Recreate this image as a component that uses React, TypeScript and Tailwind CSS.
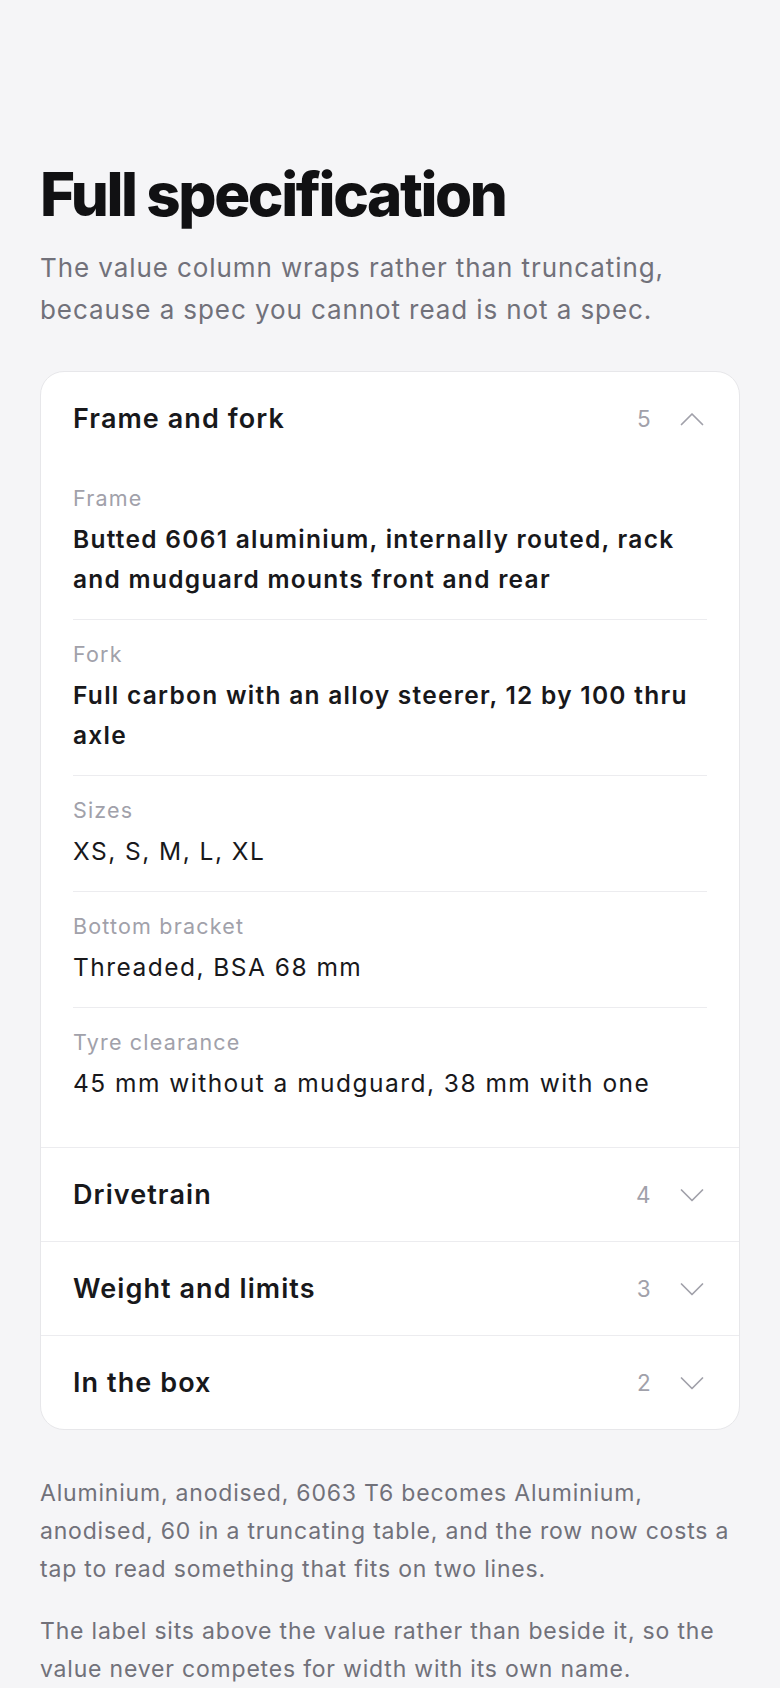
import { useState } from 'react';

type Spec = { label: string; value: string; strong?: boolean };

type Section = { title: string; items: Spec[] };

const sections: Section[] = [
  {
    title: 'Frame and fork',
    items: [
      { label: 'Frame', value: 'Butted 6061 aluminium, internally routed, rack and mudguard mounts front and rear', strong: true },
      { label: 'Fork', value: 'Full carbon with an alloy steerer, 12 by 100 thru axle', strong: true },
      { label: 'Sizes', value: 'XS, S, M, L, XL' },
      { label: 'Bottom bracket', value: 'Threaded, BSA 68 mm' },
      { label: 'Tyre clearance', value: '45 mm without a mudguard, 38 mm with one' },
    ],
  },
  {
    title: 'Drivetrain',
    items: [
      { label: 'Groupset', value: 'Shimano GRX 1x11' },
      { label: 'Chainring', value: '40T' },
      { label: 'Cassette', value: '11-42T' },
      { label: 'Brakes', value: 'Hydraulic disc, 160 mm rotors' },
    ],
  },
  {
    title: 'Weight and limits',
    items: [
      { label: 'Weight', value: '10.2 kg, size M' },
      { label: 'Rider limit', value: '120 kg' },
      { label: 'Rack limit', value: '25 kg' },
    ],
  },
  {
    title: 'In the box',
    items: [
      { label: 'Tools', value: 'Multi-tool and torque key' },
      { label: 'Pedals', value: 'Not included' },
    ],
  },
];

function Chevron({ up }: { up: boolean }) {
  return (
    <svg width="24" height="24" viewBox="0 0 24 24" fill="none" className="shrink-0 text-[#a1a1aa]">
      <path
        d={up ? 'M1.5 17.5L12 7L22.5 17.5' : 'M1.5 7L12 17.5L22.5 7'}
        stroke="currentColor"
        strokeWidth="1.75"
        strokeLinecap="round"
        strokeLinejoin="round"
      />
    </svg>
  );
}

export default function App() {
  const [open, setOpen] = useState<number | null>(0);

  return (
    <div className="min-h-screen bg-[#f5f5f7] px-10 pt-[164px] pb-10 font-['Inter',sans-serif]">
      <h1 className="text-[60px] leading-none font-extrabold tracking-[-0.04em] text-[#111113]">
        Full specification
      </h1>
      <p className="mt-[23px] text-[26px] leading-[42px] tracking-[0.035em] text-[#71717a]">
        The value column wraps rather than truncating, because a spec you cannot read is not a spec.
      </p>

      <div className="mt-10 overflow-hidden rounded-3xl border border-[#e7e7ea] bg-white">
        {sections.map((section, i) => {
          const isOpen = open === i;
          return (
            <div key={section.title} className={i > 0 ? 'border-t border-[#ececef]' : ''}>
              <button
                type="button"
                onClick={() => setOpen(isOpen ? null : i)}
                className="flex w-full items-center justify-between py-8 pl-8 pr-[35px] text-left"
              >
                <span className="text-[27px] leading-[29px] font-semibold tracking-[0.04em] text-[#18181b]">
                  {section.title}
                </span>
                <span className="flex items-center gap-[28px]">
                  <span className="text-[22.5px] leading-[29px] tracking-[0.06em] text-[#a1a1aa]">
                    {section.items.length}
                  </span>
                  <Chevron up={isOpen} />
                </span>
              </button>
              {isOpen && (
                <div className="-mt-px px-8 pb-6">
                  {section.items.map((item, j) => (
                    <div
                      key={item.label}
                      className={`py-5 ${j < section.items.length - 1 ? 'border-b border-[#ececef]' : ''}`}
                    >
                      <div className="text-[21.5px] leading-[28px] tracking-[0.055em] text-[#a1a1aa]">
                        {item.label}
                      </div>
                      <div
                        className={`mt-[7px] text-[24.5px] leading-[40px] text-[#18181b] ${
                          item.strong ? 'font-semibold tracking-[0.052em]' : 'font-normal tracking-[0.06em]'
                        }`}
                      >
                        {item.value}
                      </div>
                    </div>
                  ))}
                </div>
              )}
            </div>
          );
        })}
      </div>

      <p className="mt-11 text-[23px] leading-[38px] tracking-[0.035em] text-[#71717a]">
        Aluminium, anodised, 6063 T6 becomes Aluminium, anodised, 60 in a truncating table, and the row now
        costs a tap to read something that fits on two lines.
      </p>
      <p className="mt-6 text-[23px] leading-[38px] tracking-[0.035em] text-[#71717a]">
        The label sits above the value rather than beside it, so the value never competes for width with its own
        name.
      </p>
    </div>
  );
}
